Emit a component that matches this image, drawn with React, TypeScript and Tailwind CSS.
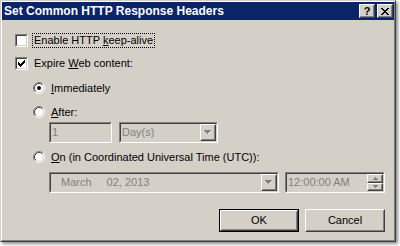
import React from 'react';

// classic windows 3d borders
function Sunken({ className = '', inner = '', children }: { className?: string; inner?: string; children?: React.ReactNode }) {
  return (
    <div className={`border border-t-[#808080] border-l-[#808080] border-r-white border-b-white ${className}`}>
      <div className={`h-full w-full border border-t-[#404040] border-l-[#404040] border-r-[#d4d0c8] border-b-[#d4d0c8] ${inner}`}>
        {children}
      </div>
    </div>
  );
}

function Raised({ className = '', inner = '', children }: { className?: string; inner?: string; children?: React.ReactNode }) {
  return (
    <div className={`border border-t-white border-l-white border-r-[#404040] border-b-[#404040] bg-[#d4d0c8] ${className}`}>
      <div className={`h-full w-full border border-t-[#d4d0c8] border-l-[#d4d0c8] border-r-[#808080] border-b-[#808080] ${inner}`}>
        {children}
      </div>
    </div>
  );
}

function Checkbox({ checked }: { checked?: boolean }) {
  return (
    <Sunken className="h-[13px] w-[13px] shrink-0" inner="bg-white flex items-center justify-center">
      {checked && (
        <svg width="7" height="7" viewBox="0 0 7 7" shapeRendering="crispEdges">
          <path d="M0 2h1v3h-1zM1 3h1v3h-1zM2 4h1v3h-1zM3 3h1v3h-1zM4 2h1v3h-1zM5 1h1v3h-1zM6 0h1v3h-1z" fill="#000" />
        </svg>
      )}
    </Sunken>
  );
}

function Radio({ checked }: { checked?: boolean }) {
  return (
    <svg width="12" height="12" viewBox="0 0 12 12" className="shrink-0">
      <circle cx="6" cy="6" r="5" fill="#fff" />
      <path d="M2.11 9.89 A5.5 5.5 0 0 1 9.89 2.11" stroke="#808080" strokeWidth="1" fill="none" />
      <path d="M9.89 2.11 A5.5 5.5 0 0 1 2.11 9.89" stroke="#fff" strokeWidth="1" fill="none" />
      <path d="M2.82 9.18 A4.5 4.5 0 0 1 9.18 2.82" stroke="#404040" strokeWidth="1" fill="none" />
      <path d="M9.18 2.82 A4.5 4.5 0 0 1 2.82 9.18" stroke="#d4d0c8" strokeWidth="1" fill="none" />
      {checked && <circle cx="6" cy="6" r="2" fill="#000" />}
    </svg>
  );
}

function DownArrow() {
  return (
    <svg width="8" height="5" viewBox="0 0 8 5" shapeRendering="crispEdges">
      <path d="M1 1h6v1h-1v1h-1v1h-2v-1h-1v-1h-1z" fill="#fff" />
      <path d="M0 0h7v1h-1v1h-1v1h-1v1h-1v-1h-1v-1h-1v-1h-1z" fill="#808080" />
    </svg>
  );
}

function ComboButton() {
  return (
    <Raised className="h-full w-[16px] shrink-0" inner="flex items-center justify-center">
      <DownArrow />
    </Raised>
  );
}

export default function App() {
  return (
    <div className="w-[400px] h-[246px] bg-white font-['Liberation_Sans',Arial,sans-serif] text-[11px] text-black">
      <div className="w-[396px] h-[242px] border border-t-[#d4d0c8] border-l-[#d4d0c8] border-r-[#404040] border-b-[#404040] shadow-[2px_2px_3px_rgba(0,0,0,0.45)]">
        <div className="h-full w-full border border-t-white border-l-white border-r-[#808080] border-b-[#808080] bg-[#d4d0c8] flex flex-col">
          {/* title bar */}
          <div className="h-[18px] bg-[#0a246a] flex items-center pl-[2px] pr-[1px]">
            <span className="flex-1 text-white font-bold text-[12px] leading-none">Set Common HTTP Response Headers</span>
            <Raised className="w-[16px] h-[14px]" inner="flex items-center justify-center">
              <span className="font-bold text-[11px] leading-none">?</span>
            </Raised>
            <Raised className="ml-[2px] w-[16px] h-[14px]" inner="flex items-center justify-center">
              <svg width="8" height="7" viewBox="0 0 8 7" shapeRendering="crispEdges">
                <path d="M0 0h2v1h1v1h2v-1h1v-1h2v1h-1v1h-1v1h-1v1h1v1h1v1h1v1h-2v-1h-1v-1h-2v1h-1v1h-2v-1h1v-1h1v-1h1v-1h-1v-1h-1v-1h-1z" fill="#000" />
              </svg>
            </Raised>
          </div>

          {/* keep-alive */}
          <div className="mt-[14px] h-[13px] flex items-center pl-[13px]">
            <Checkbox />
            <span className="ml-[4px] h-[15px] px-[1px] border border-dotted border-black flex items-center whitespace-pre">
              Enable HTTP <span className="underline">k</span>eep-alive
            </span>
          </div>

          {/* expire */}
          <div className="mt-[10px] h-[13px] flex items-center pl-[13px]">
            <Checkbox checked />
            <span className="ml-[6px]">
              Expire <span className="underline">W</span>eb content:
            </span>
          </div>

          <div className="mt-[12px] h-[12px] flex items-center pl-[31px]">
            <Radio checked />
            <span className="ml-[6px]">
              <span className="underline">I</span>mmediately
            </span>
          </div>

          <div className="mt-[12px] h-[12px] flex items-center pl-[31px]">
            <Radio />
            <span className="ml-[6px]">
              <span className="underline">A</span>fter:
            </span>
          </div>

          <div className="mt-[4px] h-[21px] flex pl-[47px]">
            <Sunken className="w-[63px] h-full" inner="flex items-center pl-[1px] text-[#808080]">
              1
            </Sunken>
            <Sunken className="ml-[7px] w-[99px] h-full" inner="flex items-center pl-[1px] text-[#808080]">
              <span className="flex-1">Day(s)</span>
              <ComboButton />
            </Sunken>
          </div>

          <div className="mt-[8px] h-[12px] flex items-center pl-[31px]">
            <Radio />
            <span className="ml-[6px]">
              <span className="underline">O</span>n (in Coordinated Universal Time (UTC)):
            </span>
          </div>

          <div className="mt-[9px] h-[21px] flex pl-[47px]">
            <Sunken className="w-[230px] h-full" inner="flex items-center text-[#808080]">
              <span className="ml-[10px]">March</span>
              <span className="ml-[15px] flex-1">02, 2013</span>
              <ComboButton />
            </Sunken>
            <Sunken className="ml-[6px] w-[100px] h-full" inner="flex items-center text-[#808080]">
              <span className="ml-[1px] flex-1">12:00:00 AM</span>
              <div className="h-full w-[16px] flex flex-col">
                <Raised className="h-1/2 w-full" inner="flex items-center justify-center">
                  <svg width="5" height="3" viewBox="0 0 5 3" shapeRendering="crispEdges">
                    <path d="M2 0h1v1h1v1h1v1h-5v-1h1v-1h1z" fill="#808080" />
                  </svg>
                </Raised>
                <Raised className="h-1/2 w-full" inner="flex items-center justify-center">
                  <svg width="5" height="3" viewBox="0 0 5 3" shapeRendering="crispEdges">
                    <path d="M0 0h5v1h-1v1h-1v1h-1v-1h-1v-1h-1z" fill="#808080" />
                  </svg>
                </Raised>
              </div>
            </Sunken>
          </div>

          <div className="mt-[16px] h-[23px] flex justify-end pr-[9px]">
            <div className="w-[80px] h-full border border-black">
              <Raised className="h-full w-full" inner="flex items-center justify-center">
                OK
              </Raised>
            </div>
            <Raised className="ml-[6px] w-[80px] h-full" inner="flex items-center justify-center">
              Cancel
            </Raised>
          </div>
        </div>
      </div>
    </div>
  );
}
